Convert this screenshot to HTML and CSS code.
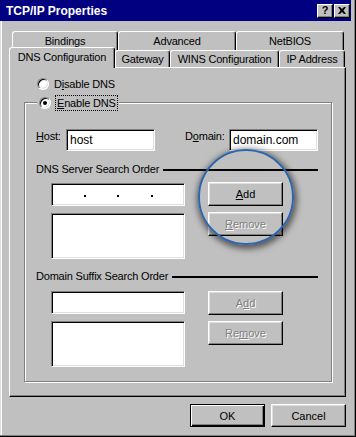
FILE: index.html
```html
<!DOCTYPE html>
<html lang="en">
<head>
  <meta charset="UTF-8">
  <title>TCP/IP Properties</title>
  <link rel="stylesheet" href="styles.css">
</head>
<body>
  <div class="window">
    <div class="titlebar">
      <span class="title">TCP/IP Properties</span>
      <div class="caption-btns">
        <button class="cap-btn">?</button>
        <button class="cap-btn"><svg width="8" height="7" viewBox="0 0 8 7"><path d="M0 0h2l2 2 2-2h2L5.5 3.5 8 7H6L4 5 2 7H0l2.5-3.5z" fill="#000"/></svg></button>
      </div>
    </div>

    <div class="tabs">
      <div class="tab-row back">
        <div class="tab t-bindings">Bindings</div>
        <div class="tab t-advanced">Advanced</div>
        <div class="tab t-netbios">NetBIOS</div>
      </div>
      <div class="tab-row front">
        <div class="tab active t-dns">DNS Configuration</div>
        <div class="tab t-gateway">Gateway</div>
        <div class="tab t-wins">WINS Configuration</div>
        <div class="tab t-ip">IP Address</div>
      </div>
    </div>

    <div class="panel">
      <label class="radio"><span class="radio-dot"></span><span>D<u>i</u>sable DNS</span></label>

      <fieldset class="group">
        <legend>
          <label class="radio"><span class="radio-dot checked"></span><span class="focus"><u>E</u>nable DNS</span></label>
        </legend>

        <div class="host-row">
          <label class="lbl-host"><u>H</u>ost:</label>
          <div class="field text">host</div>
          <label class="lbl-domain">D<u>o</u>main:</label>
          <div class="field text">domain.com</div>
        </div>

        <div class="section-title"><span>DNS Server Search Order</span><i class="rule"></i></div>
        <div class="order first">
          <div class="col-left">
            <div class="field ip"><b></b><b></b><b></b></div>
            <div class="field list"></div>
          </div>
          <div class="col-right">
            <button class="btn"><u>A</u>dd</button>
            <button class="btn disabled"><u>R</u>emove</button>
          </div>
        </div>

        <div class="section-title second"><span>Domain Suffix Search Order</span><i class="rule"></i></div>
        <div class="order">
          <div class="col-left">
            <div class="field"></div>
            <div class="field list"></div>
          </div>
          <div class="col-right">
            <button class="btn disabled">A<u>d</u>d</button>
            <button class="btn disabled">Re<u>m</u>ove</button>
          </div>
        </div>
      </fieldset>
    </div>

    <div class="footer">
      <button class="btn default">OK</button>
      <button class="btn">Cancel</button>
    </div>

    <!-- highlight ring over the Add button -->
    <div class="magnifier"></div>
  </div>
</body>
</html>
```

FILE: styles.css
```css
* { box-sizing: border-box; margin: 0; padding: 0; }
body {
  font-family: "Liberation Sans", Arial, sans-serif;
  font-size: 11px;
  letter-spacing: -0.2px;
  color: #000;
  background: #c0c0c0;
}
.window {
  position: relative;
  width: 356px;
  height: 437px;
  background: #c0c0c0;
  border-right: 1px solid #000;
  border-bottom: 1px solid #000;
  box-shadow: inset -1px -1px #808080, inset 1px 0 #dfdfdf, inset 2px 0 #fff;
}

/* title bar */
.titlebar {
  height: 21px;
  margin-right: 4px;
  background: #000080;
  display: flex;
  align-items: center;
  justify-content: space-between;
  padding: 0 1px 0 6px;
}
.title {
  color: #fff;
  font-weight: bold;
  font-size: 12px;
  letter-spacing: 0;
}
.caption-btns { display: flex; gap: 1px; }
.cap-btn {
  width: 16px;
  height: 14px;
  background: #c0c0c0;
  border: 1px solid;
  border-color: #fff #000 #000 #fff;
  box-shadow: inset -1px -1px #808080;
  font: bold 11px "Liberation Sans", Arial, sans-serif;
  line-height: 11px;
  display: flex;
  align-items: center;
  justify-content: center;
}

/* tabs */
.tabs { margin-top: 10px; }
.tab-row { display: flex; }
.tab-row.back { padding-left: 12px; height: 19px; }
.tab-row.front { padding-left: 9px; height: 17px; align-items: flex-start; }
.tab {
  height: 100%;
  background: #c0c0c0;
  border-top: 1px solid #fff;
  border-left: 1px solid #fff;
  border-right: 1px solid #000;
  border-radius: 3px 3px 0 0;
  box-shadow: inset -1px 0 #808080;
  display: flex;
  align-items: center;
  justify-content: center;
  white-space: nowrap;
}
.front .tab { height: 17px; }
.tab.active {
  position: relative;
  z-index: 2;
  height: 21px;
  margin-top: -3px;
  padding-bottom: 3px;
}
.t-bindings { width: 106px; }
.t-advanced { width: 118px; }
.t-netbios { width: 108px; }
.t-dns { width: 106px; }
.t-gateway { width: 55px; }
.t-wins { width: 109px; }
.t-ip { width: 66px; }

/* panel */
.panel {
  margin-left: 9px;
  width: 337px;
  height: 330px;
  border-top: 1px solid #fff;
  border-left: 1px solid #fff;
  border-right: 1px solid #000;
  border-bottom: 1px solid #000;
  box-shadow: inset -1px -1px #808080;
  padding: 9px 0 0 14px;
}
.radio {
  display: flex;
  align-items: center;
  height: 14px;
}
.panel > .radio { margin-left: 13px; gap: 5px; }
.radio-dot {
  position: relative;
  width: 12px;
  height: 12px;
  border-radius: 50%;
  border: 1px solid;
  border-color: #808080 #fff #fff #808080;
  box-shadow: inset 1px 1px #000, inset -1px -1px #dfdfdf;
  background: #fff;
}
.radio-dot.checked::after {
  content: "";
  position: absolute;
  left: 3px;
  top: 3px;
  width: 4px;
  height: 4px;
  border-radius: 50%;
  background: #000;
}
.focus {
  border: 1px dotted #000;
  padding: 1px 1px;
  line-height: 12px;
}

/* group box */
.group {
  width: 308px;
  margin-top: 3px;
  border: 1px solid #808080;
  box-shadow: inset 1px 1px #fff, 1px 1px #fff;
  padding: 0 13px 14px 11px;
}
.group legend {
  margin-left: 1px;
  padding: 0 1px 0 2px;
  background: #c0c0c0;
}
.group legend .radio { height: 17px; gap: 4px; }

.host-row {
  display: flex;
  align-items: flex-start;
  margin-top: 18px;
  height: 22px;
}
.host-row label { padding-top: 1px; line-height: 13px; }
.lbl-host { width: 30px; }
.lbl-domain { width: 44px; margin-left: 30px; }

.field {
  background: #fff;
  border: 1px solid;
  border-color: #808080 #fff #fff #808080;
  box-shadow: inset 1px 1px #000, inset -1px -1px #dfdfdf;
  height: 23px;
}
.field.text {
  width: 89px;
  height: 22px;
  padding: 2px 3px 0;
  font-size: 12px;
  line-height: 17px;
  letter-spacing: 0;
}
.field.ip {
  display: flex;
  justify-content: space-evenly;
  align-items: center;
  padding-top: 3px;
}
.field.ip b { width: 2px; height: 2px; background: #000; }
.field.list { height: 46px; }

.section-title {
  display: flex;
  align-items: center;
  margin-top: 12px;
  line-height: 13px;
}
.section-title.second { margin-top: 11px; }
.rule {
  flex: 1;
  height: 2px;
  margin-left: 4px;
  background: #000;
}

.order {
  display: flex;
  gap: 23px;
  margin-top: 8px;
  padding-left: 15px;
}
.order.first { margin-top: 7px; }
.col-left { width: 134px; display: flex; flex-direction: column; gap: 7px; }
.col-right { display: flex; flex-direction: column; gap: 6px; }
.first .col-right { margin-top: -1px; }

/* buttons */
.btn {
  width: 75px;
  height: 24px;
  background: #c0c0c0;
  border: 1px solid;
  border-color: #fff #000 #000 #fff;
  box-shadow: inset -1px -1px #808080, inset 1px 1px #dfdfdf;
  font: 11px "Liberation Sans", Arial, sans-serif;
  color: #000;
}
.btn.disabled {
  color: #808080;
  text-shadow: 1px 1px #fff;
}
.btn.default {
  border-color: #000;
  box-shadow: inset 1px 1px #fff, inset -1px -1px #000, inset -2px -2px #808080;
}

.footer {
  display: flex;
  justify-content: flex-end;
  gap: 6px;
  margin-top: 7px;
  padding-right: 9px;
}
.footer .btn { height: 23px; }

.magnifier {
  position: absolute;
  left: 198px;
  top: 149px;
  width: 96px;
  height: 96px;
  border-radius: 50%;
  border: 2px solid #2d66ad;
  box-shadow: 1px 2px 6px 2px rgba(0, 0, 0, 0.55);
  pointer-events: none;
}
```
